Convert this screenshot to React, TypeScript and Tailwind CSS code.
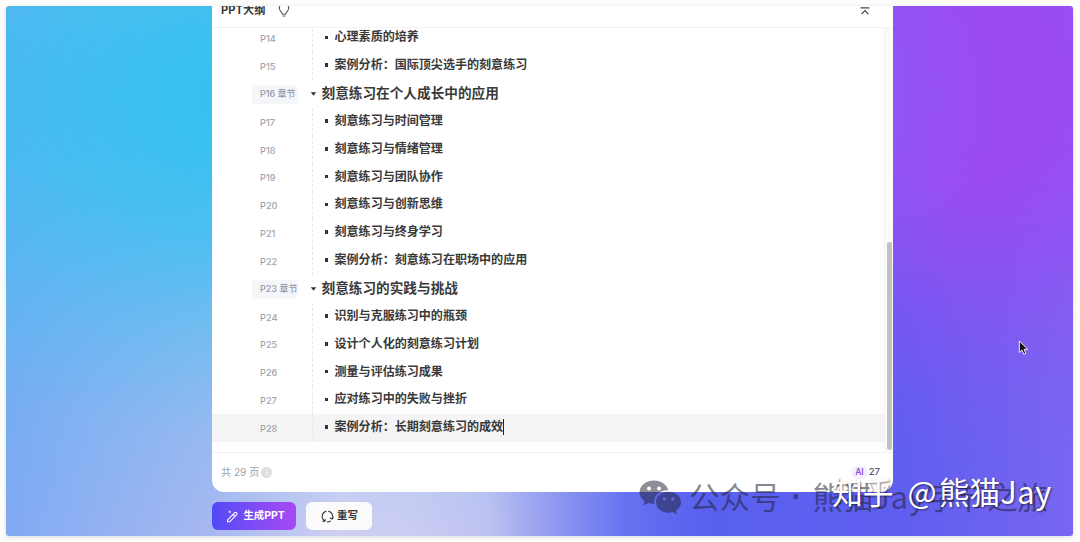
import React from "react";

type OutlineItem = {
  page: number;
  title: string;
  chapter?: boolean;
  active?: boolean;
};

const items: OutlineItem[] = [
  { page: 14, title: "心理素质的培养" },
  { page: 15, title: "案例分析：国际顶尖选手的刻意练习" },
  { page: 16, title: "刻意练习在个人成长中的应用", chapter: true },
  { page: 17, title: "刻意练习与时间管理" },
  { page: 18, title: "刻意练习与情绪管理" },
  { page: 19, title: "刻意练习与团队协作" },
  { page: 20, title: "刻意练习与创新思维" },
  { page: 21, title: "刻意练习与终身学习" },
  { page: 22, title: "案例分析：刻意练习在职场中的应用" },
  { page: 23, title: "刻意练习的实践与挑战", chapter: true },
  { page: 24, title: "识别与克服练习中的瓶颈" },
  { page: 25, title: "设计个人化的刻意练习计划" },
  { page: 26, title: "测量与评估练习成果" },
  { page: 27, title: "应对练习中的失败与挫折" },
  { page: 28, title: "案例分析：长期刻意练习的成效", active: true },
];

function BulbIcon() {
  return (
    <svg width="12" height="14" viewBox="0 0 12 14" fill="none" stroke="#555a66" strokeWidth="1.1" strokeLinecap="round" strokeLinejoin="round">
      <path d="M4.2 10.8C4.2 9 1.3 8.2 1.3 4.9a4.7 4.7 0 0 1 9.4 0C10.7 8.2 7.8 9 7.8 10.8" />
      <path d="M4.4 11.2h3.2M5 13h2" />
    </svg>
  );
}

function CollapseIcon() {
  return (
    <svg width="10" height="8" viewBox="0 0 10 8" fill="none" stroke="#444" strokeWidth="1.1">
      <path d="M0.6 0.9h8.8M1.6 7 5 3.6 8.4 7" />
    </svg>
  );
}

function WandIcon() {
  return (
    <svg width="12" height="13" viewBox="0 0 12 13" fill="none" stroke="#fff" strokeWidth="1.1" strokeLinecap="round" strokeLinejoin="round">
      <path d="M1.6 9.8 8.5 2.8a1.4 1.4 0 0 1 2 2L3.6 11.8H1.6ZM6.9 4.5l1.9 1.9" />
      <path d="M3.8 1v1.8M2.9 1.9h1.8" strokeWidth="0.8" />
    </svg>
  );
}

function RewriteIcon() {
  return (
    <svg width="13" height="13" viewBox="0 0 13 13" fill="none" stroke="#333" strokeWidth="1.1" strokeLinecap="round" strokeLinejoin="round">
      <path d="M3.9 11.1A5.3 5.3 0 0 1 5 1.4M1.9 11.3H4.1V9.2" />
      <path d="M7.6 1.3A5.3 5.3 0 0 1 11.2 8.8M9.3 8 11.1 9.1 12.2 7.3" />
      <path d="M6.6 11.9q1.6 0 2.8-.8" />
    </svg>
  );
}

function WechatIcon() {
  return (
    <svg width="43" height="35" viewBox="0 0 43 35" fill="#202033" fillRule="evenodd">
      <path d="M15 .5C6.9.5.5 5.7.5 12.3c0 3.7 2 6.9 5.2 9.1L4.3 25.7 9.4 23.1c1.8.5 3.8.9 5.8.9C14 15.8 20.5 9.9 29.2 10.2 27.9 4.6 22 .5 15 .5ZM10 6.5a2 2 0 1 1 0 4 2 2 0 0 1 0-4Zm10 0a2 2 0 1 1 0 4 2 2 0 0 1 0-4Z" />
      <path d="M29.5 11.8c-7.2 0-12.6 4.6-12.6 10.4s5.4 10.5 12.6 10.5c1.5 0 3-.3 4.4-.6l4.1 2.3-1.1-3.8c3.1-2 5.1-4.9 5.1-8.4 0-5.8-5.7-10.4-12.5-10.4Zm-4.3 5.5a1.6 1.6 0 1 1 0 3.2 1.6 1.6 0 0 1 0-3.2Zm8.6 0a1.6 1.6 0 1 1 0 3.2 1.6 1.6 0 0 1 0-3.2Z" />
    </svg>
  );
}

function OutlineRow({ item }: { item: OutlineItem }) {
  if (item.chapter) {
    return (
      <div className="flex h-[28.4px] shrink-0 items-center">
        <span className="ml-10 flex h-[19px] w-[46px] items-center whitespace-nowrap rounded bg-[#f4f6fa] pl-2 text-[9px] font-medium text-[#9599a8]">
          P{item.page} 章节
        </span>
        <svg className="ml-3 shrink-0" width="7" height="4" viewBox="0 0 7 4">
          <path d="M0.8 0.2h5.4L3.5 3.8Z" fill="#333" />
        </svg>
        <span className="ml-[4.5px] pb-px text-[13.65px] font-bold text-[#3a3a3a]">{item.title}</span>
      </div>
    );
  }
  return (
    <div className={`flex h-[27.75px] shrink-0 items-center ${item.active ? "bg-[#f4f4f4]" : ""}`}>
      <span className="w-[100px] pl-12 pt-px text-[9.2px] font-medium text-[#a2a5ad]">P{item.page}</span>
      <span className="h-full border-l border-dashed border-[#e9e9ec]" />
      <span className="mb-[2px] ml-[11.5px] size-[3.5px] bg-[#333]" />
      <span className="ml-[6.5px] pb-[2px] text-[12.05px] font-bold text-[#3a3a3a]">{item.title}</span>
      {item.active && <span className="mb-[2px] h-4 w-px bg-[#222]" />}
    </div>
  );
}

export default function App() {
  return (
    <div className="relative h-[542px] w-[1080px] overflow-hidden bg-[#fdfdfc] px-1.5 pt-1.5 font-['Inter','Noto_Sans_CJK_SC',sans-serif]">
      <div className="flex h-[530px] w-[1067px] flex-col overflow-hidden rounded-[3px] bg-[radial-gradient(ellipse_720px_450px_at_265px_90px,#31c1f1_0%,#31c1f1ee_14%,#31c1f1c4_32%,#31c1f16b_55%,#31c1f124_76%,#31c1f100_100%),radial-gradient(ellipse_420px_380px_at_954px_80px,#9b4bf2_0%,#9b4bf2fa_26%,#9b4bf2bf_42%,#9b4bf261_62%,#9b4bf21f_82%,#9b4bf200_100%),linear-gradient(to_right,#80aaf3_0px,#a9b8f0_205px,#d0cff2_330px,#cccdf2_400px,#bfc3f2_480px,#8f98f0_550px,#6572f0_620px,#5860ee_700px,#5f5ef0_890px,#7866f0_1067px)] shadow-[0_1px_4px_#0002]">
        <main className="ml-[206px] flex h-[486px] w-[681px] shrink-0 flex-col overflow-hidden rounded-b-xl bg-white">
          <header className="flex h-[22px] shrink-0 items-start border-b border-[#f3f3f4] pl-[9px] pr-[23px]">
            <h1 className="-mt-[4px] text-[11.2px] font-bold leading-[17px] text-[#3a3a3a]">PPT大纲</h1>
            <span className="-mt-[3px] ml-[13px]">
              <BulbIcon />
            </span>
            <span className="ml-auto mt-[1px]">
              <CollapseIcon />
            </span>
          </header>

          <div className="flex h-[424px] shrink-0">
            <div className="flex w-[673px] flex-col justify-end overflow-hidden border-r border-[#f4f4f4] pb-[10px]">
              {items.map((item) => (
                <OutlineRow key={item.page} item={item} />
              ))}
            </div>
            <div className="flex-1 bg-[#fbfbfb] pl-[2px] pt-[214px]">
              <div className="h-[208px] w-[5px] rounded-full bg-[#c1c1c3]" />
            </div>
          </div>

          <footer className="flex h-10 items-center border-t border-[#f3f3f4] pl-[9px] pr-[13px]">
            <span className="text-[10.1px] text-[#a0a3aa]">共 29 页</span>
            <span className="ml-[2px] flex size-[11px] items-center justify-center rounded-full bg-[#dcdee2] text-[8px] text-white">i</span>
            <div className="ml-auto flex h-[18px] items-center text-[9.5px] font-medium text-[#555a70]">
              <span className="mr-[1px] rounded-lg bg-[#f5effd] px-1 text-[8.5px] font-semibold text-[#8d50de]">AI</span>
              27
            </div>
          </footer>
        </main>

        <div className="ml-[206px] mt-[10px] flex gap-[10px]">
          <button className="flex h-[28px] w-[84px] items-center justify-center gap-[5px] rounded-md bg-gradient-to-r from-[#5149f5] to-[#a848f5] pl-[3px] text-[10.4px] font-bold text-white">
            <WandIcon />
            生成PPT
          </button>
          <button className="flex h-[28px] w-[66px] items-center justify-center gap-[3px] rounded-md bg-[#fbfbfc] pl-px text-[10.5px] font-bold text-[#3a3a3a]">
            <RewriteIcon />
            重写
          </button>
        </div>
      </div>

      {/* mouse pointer */}
      <svg className="absolute left-[1018px] top-[340px]" width="11" height="16" viewBox="0 0 11 16">
        <path d="M1.3 1v11.4l2.7-2.3 1.8 4.2 2-.9L6 9.3h3.7Z" fill="#111" stroke="#fff" strokeWidth="0.9" />
      </svg>

      {/* watermarks */}
      <div className="absolute left-[639px] top-[480px] opacity-50">
        <WechatIcon />
      </div>
      <div className="absolute left-[689px] top-[476px] flex whitespace-pre font-['Noto_Sans_CJK_SC',sans-serif] text-[30.5px] leading-[40px] text-[#202033]/55">
        <span>公众号</span>
        <span className="w-[32px] text-center font-['Liberation_Sans',sans-serif] font-bold">·</span>
        <span>熊猫</span>
        <span className="tracking-[1px]">Jay</span>
        <span>字节之旅</span>
      </div>
      <div className="absolute left-[832px] top-[471px] flex whitespace-pre font-['Noto_Sans_CJK_SC',sans-serif] text-[30.8px] leading-[40px] text-white [text-shadow:1px_1px_2px_#0008]">
        <span>知乎</span>
        <span className="ml-[14px] mr-[2px]">@</span>
        <span>熊猫</span>
        <span className="tracking-[0.5px]">Jay</span>
      </div>
    </div>
  );
}
